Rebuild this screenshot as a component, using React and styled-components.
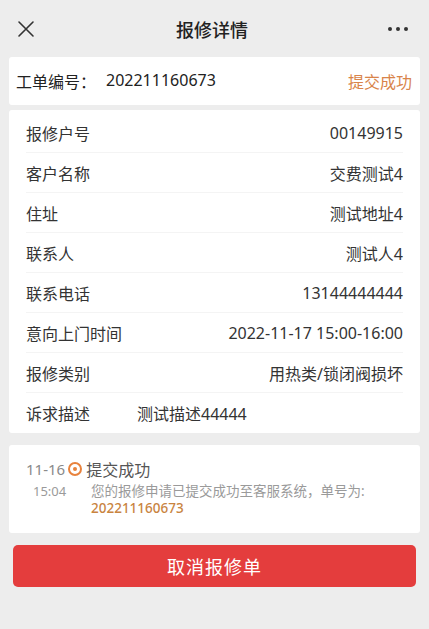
import React from "react";
import styled, { createGlobalStyle } from "styled-components";

const Global = createGlobalStyle`
  html, body { margin: 0; padding: 0; background: #ededed; }
  body { font-family: "Noto Sans", "Noto Sans CJK SC", sans-serif; color: #333; }
  * { box-sizing: border-box; }
`;

const Page = styled.div`
  width: 429px;
  min-height: 629px;
  background: #ededed;
  display: flex;
  flex-direction: column;
`;

const Header = styled.div`
  height: 57px;
  display: flex;
  align-items: center;
  justify-content: space-between;
  padding: 0 20px 0 15px;
`;

const Title = styled.div`
  font-size: 18px;
  font-weight: 500;
  color: #222;
  font-family: "Noto Sans CJK SC", sans-serif;
`;

const IconBtn = styled.div`
  width: 22px;
  display: flex;
  align-items: center;
  justify-content: center;
`;

const Card = styled.div`
  margin: 0 9px;
  background: #fff;
  border-radius: 3px;
`;

const OrderCard = styled(Card)`
  height: 48px;
  display: flex;
  align-items: center;
  justify-content: space-between;
  padding: 0 8px 0 7px;
  font-size: 16px;
`;

const OrderNo = styled.div`
  color: #222;
  display: flex;
  gap: 10px;
`;

const Status = styled.div`
  color: #d9844a;
  font-family: "Noto Sans CJK SC", sans-serif;
`;

const InfoCard = styled(Card)`
  margin-top: 5px;
  padding: 3px 17px 0;
`;

const Row = styled.div`
  height: 40px;
  display: flex;
  align-items: center;
  justify-content: ${(p) => (p.$left ? "flex-start" : "space-between")};
  font-size: 16px;
  border-bottom: ${(p) => (p.$last ? "none" : "1px solid #f4f4f4")};
`;

const Label = styled.span`
  color: #333;
  width: ${(p) => (p.$left ? "111px" : "auto")};
  flex-shrink: 0;
`;

const Value = styled.span`
  color: #333;
`;

const TimelineCard = styled(Card)`
  margin-top: 12px;
  padding: 13px 17px 14px;
  min-height: 88px;
`;

const TLHead = styled.div`
  display: flex;
  align-items: center;
  height: 22px;
`;

const TLDate = styled.span`
  font-size: 15px;
  color: #8a8a8a;
  white-space: nowrap;
  flex-shrink: 0;
  margin-right: 3px;
`;

const Dot = styled.span`
  width: 14px;
  height: 14px;
  flex-shrink: 0;
  border-radius: 50%;
  border: 2.5px solid #e8823c;
  display: flex;
  align-items: center;
  justify-content: center;
  margin-right: 4px;
  &::after {
    content: "";
    width: 4px;
    height: 4px;
    border-radius: 50%;
    background: #e8823c;
  }
`;

const TLTitle = styled.span`
  font-size: 16px;
  color: #555;
  font-family: "Noto Sans CJK SC", sans-serif;
`;

const TLBody = styled.div`
  display: flex;
  margin-top: 3px;
`;

const TLTime = styled.span`
  width: 65px;
  flex-shrink: 0;
  padding-left: 7px;
  font-size: 13px;
  color: #9a9a9a;
  line-height: 17px;
  white-space: nowrap;
`;

const TLDesc = styled.div`
  font-size: 13.5px;
  color: #9a9a9a;
  line-height: 17px;
`;

const TLNum = styled.span`
  color: #c9843f;
  font-weight: 500;
`;

const CancelButton = styled.button`
  margin: 12px 13px 0;
  height: 42px;
  border: none;
  border-radius: 5px;
  background: #e43d3d;
  color: #fff;
  font-size: 18px;
  font-family: "Noto Sans CJK SC", sans-serif;
  letter-spacing: 1px;
`;

const rows = [
  ["报修户号", "00149915"],
  ["客户名称", "交费测试4"],
  ["住址", "测试地址4"],
  ["联系人", "测试人4"],
  ["联系电话", "13144444444"],
  ["意向上门时间", "2022-11-17 15:00-16:00"],
  ["报修类别", "用热类/锁闭阀损坏"],
];

export default function App() {
  return (
    <Page>
      <Global />
      <Header>
        <IconBtn>
          <svg width="18" height="18" viewBox="0 0 18 18">
            <path d="M2 2 L16 16 M16 2 L2 16" stroke="#333" strokeWidth="1.6" strokeLinecap="round" />
          </svg>
        </IconBtn>
        <Title>报修详情</Title>
        <IconBtn>
          <svg width="22" height="6" viewBox="0 0 22 6">
            <circle cx="3" cy="3" r="2" fill="#333" />
            <circle cx="11" cy="3" r="2" fill="#333" />
            <circle cx="19" cy="3" r="2" fill="#333" />
          </svg>
        </IconBtn>
      </Header>

      <OrderCard>
        <OrderNo>
          <span>工单编号：</span>
          <span>202211160673</span>
        </OrderNo>
        <Status>提交成功</Status>
      </OrderCard>

      <InfoCard>
        {rows.map(([k, v]) => (
          <Row key={k}>
            <Label>{k}</Label>
            <Value>{v}</Value>
          </Row>
        ))}
        <Row $left $last>
          <Label $left>诉求描述</Label>
          <Value>测试描述44444</Value>
        </Row>
      </InfoCard>

      <TimelineCard>
        <TLHead>
          <TLDate>11-16</TLDate>
          <Dot />
          <TLTitle>提交成功</TLTitle>
        </TLHead>
        <TLBody>
          <TLTime>15:04</TLTime>
          <TLDesc>
            您的报修申请已提交成功至客服系统，单号为: <TLNum>202211160673</TLNum>
          </TLDesc>
        </TLBody>
      </TimelineCard>

      <CancelButton>取消报修单</CancelButton>
    </Page>
  );
}
